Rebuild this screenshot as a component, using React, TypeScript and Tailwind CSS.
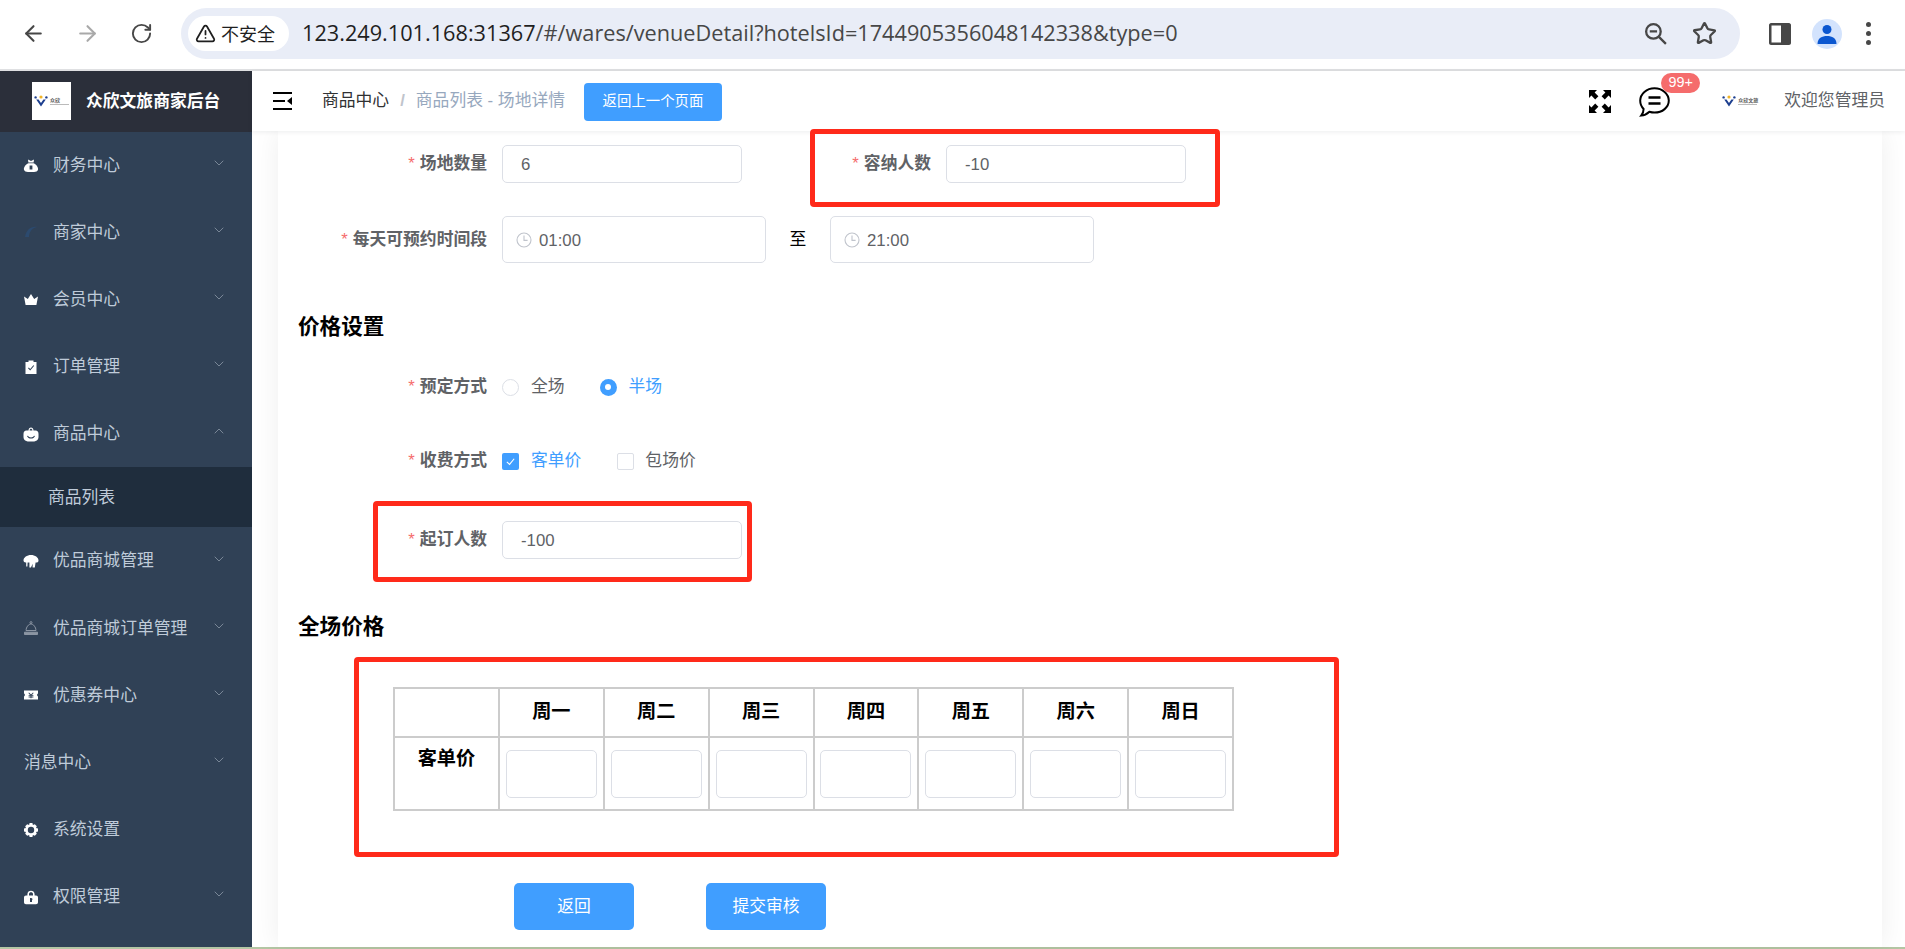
import { ArrowLeft, ArrowRight, ChevronDown, ChevronUp, RotateCw, Star, TriangleAlert } from "lucide-react";
import type { ReactNode } from "react";

const FONT = "font-['Liberation_Sans','Noto_Sans_CJK_SC',sans-serif]";

const icons: Record<string, ReactNode> = {
  bag: (
    <path d="M4 1.5 L7 3 L10 1.5 L9.6 4.4 L4.4 4.4 Z M4.4 5.2 H9.6 C12.6 6.6 14.6 9.6 14 11.8 C13.5 13.6 12 14 10 14 H4 C2 14 .5 13.6 0 11.8 C-.6 9.6 1.4 6.6 4.4 5.2 Z M5.6 7.6 V11.6 H8.4 V7.6 Z" fillRule="evenodd" fill="#fff" />
  ),
  swirl: <path d="M1 12 C2 5 7 1 13 2 C8 3 5 7 5 12 Z" fill="#2c4a6e" />,
  crown: <path d="M0 4.5 L3.8 7 L7 2 L10.2 7 L14 4.5 L12.4 13 H1.6 Z" fill="#fff" />,
  order: (
    <path d="M4.5 0.5 H9.5 V2 H12.5 V14 H1.5 V2 H4.5 Z M4 8.2 L6.2 10.4 L10.2 5.8 L9.4 5.2 L6.2 8.9 L4.8 7.4 Z" fillRule="evenodd" fill="#fff" />
  ),
  goods: (
    <path d="M4.5 3.5 C4.5 -0.5 9.5 -0.5 9.5 3.5 H11.5 C13.5 3.5 14.5 5 14.5 7 V10 C14.5 13 12 14.5 9 14.5 H5 C2 14.5 -.5 13 -.5 10 V7 C-.5 5 .5 3.5 2.5 3.5 Z M5.6 3.5 H8.4 C8.4 1 5.6 1 5.6 3.5 Z M3 9 C4 12.4 10 12.4 11 9 L10 8.8 C9 11 5 11 4 8.8 Z" fillRule="evenodd" fill="#fff" />
  ),
  mall: (
    <path d="M7 1 C11 1 14.5 3.4 14.5 6.5 C14.5 8.2 13 8.8 11.6 8.4 L10.8 13.5 H8.6 L8.6 9.8 L7 13.5 H5.4 L5.4 8.6 H3.6 L3.4 12.5 H2.2 L2.2 8.4 C1 8.7 -.5 8 -.5 6.5 C-.5 3.4 3 1 7 1 Z" fill="#fff" />
  ),
  cloche: (
    <g fill="none" stroke="#8b95a3" strokeWidth="1">
      <circle cx="7" cy="1.6" r="1" />
      <path d="M2 9.5 C2.2 6 4.6 3 7 3 C9.4 3 11.8 6 12 9.5 Z" />
      <path d="M0.5 11.2 H13.5 V13.5 H0.5 Z" fill="#8b95a3" />
    </g>
  ),
  ticket: (
    <path d="M0 2.5 H14 V5.6 C12.8 5.8 12.8 8.2 14 8.4 V11.5 H0 V8.4 C1.2 8.2 1.2 5.8 0 5.6 Z M5 4.4 L7 6.6 L9 4.4 L9.6 5 L8 6.9 H9.4 V7.8 H7.5 V8.5 H9.4 V9.4 H7.5 V10.3 H6.5 V9.4 H4.6 V8.5 H6.5 V7.8 H4.6 V6.9 H6 L4.4 5 Z" fillRule="evenodd" fill="#fff" />
  ),
  gear: (
    <path d="M5.6 0 H8.4 L8.9 2 L10.8 1.2 L12.8 3.2 L12 5.1 L14 5.6 V8.4 L12 8.9 L12.8 10.8 L10.8 12.8 L8.9 12 L8.4 14 H5.6 L5.1 12 L3.2 12.8 L1.2 10.8 L2 8.9 L0 8.4 V5.6 L2 5.1 L1.2 3.2 L3.2 1.2 L5.1 2 Z M7 3.8 A3.2 3.2 0 1 0 7 10.2 A3.2 3.2 0 1 0 7 3.8 Z" fillRule="evenodd" fill="#fff" />
  ),
  lock: (
    <path d="M3.4 5.6 V4.2 C3.4 -0.4 10.6 -0.4 10.6 4.2 V5.6 H12 C13.2 5.6 14 6.4 14 7.6 V12.2 C14 13.4 13.2 14.2 12 14.2 H2 C.8 14.2 0 13.4 0 12.2 V7.6 C0 6.4 .8 5.6 2 5.6 Z M5 5.6 H9 V4.2 C9 1.6 5 1.6 5 4.2 Z M6 8 V12 H8 V10.2 C9 9.4 8.4 8 7 8 Z" fillRule="evenodd" fill="#fff" />
  ),
};

const menu = [
  { label: "财务中心", icon: "bag" },
  { label: "商家中心", icon: "swirl" },
  { label: "会员中心", icon: "crown" },
  { label: "订单管理", icon: "order" },
  { label: "商品中心", icon: "goods", open: true, children: ["商品列表"] },
  { label: "优品商城管理", icon: "mall" },
  { label: "优品商城订单管理", icon: "cloche" },
  { label: "优惠券中心", icon: "ticket" },
  { label: "消息中心" },
  { label: "系统设置", icon: "gear", leaf: true },
  { label: "权限管理", icon: "lock" },
];

const weekdays = ["周一", "周二", "周三", "周四", "周五", "周六", "周日"];

function LogoMark({ text }: { text: string }) {
  return (
    <div className="flex items-center gap-[2px]">
      <svg viewBox="0 0 14 12" className="h-[12px] w-[14px]">
        <circle cx="7" cy="2" r="1.6" fill="#f0b429" />
        <circle cx="1.6" cy="2.4" r="1.2" fill="#1d3f8f" />
        <circle cx="12.4" cy="2.4" r="1.2" fill="#1d3f8f" />
        <path d="M2.2 4.4 L7 11.6 L11.8 4.4 L9.4 4.4 L7 8 L4.6 4.4 Z" fill="#1d3f8f" />
      </svg>
      <div className="flex flex-col gap-[1px]">
        <span className="text-[5px] leading-[5px] font-bold text-[#555]">{text}</span>
        <span className="h-px w-[19px] bg-[#bbb]" />
      </div>
    </div>
  );
}

function BrowserBar() {
  return (
    <div className="flex h-[71px] shrink-0 items-center border-b-2 border-[#dfe0e2] bg-white pb-[2px]">
      <div className="flex w-[181px] items-center pl-[21px] text-[#474747]">
        <ArrowLeft size={25} strokeWidth={2} />
        <ArrowRight size={25} strokeWidth={2} className="ml-[29px] text-[#a9a9a9]" />
        <RotateCw size={23} strokeWidth={2} className="ml-[30px]" />
      </div>
      <div className="flex h-[51px] w-[1559px] items-center rounded-full bg-[#e9edf7] pl-[7px] pr-[23px]">
        <div className="flex h-[35px] w-[101px] items-center gap-[5px] rounded-full bg-white pl-[7px] font-['Noto_Sans_CJK_SC',sans-serif] text-[18px] text-[#1f1f1f]">
          <TriangleAlert size={21} strokeWidth={2} />
          <span>不安全</span>
        </div>
        <span className="ml-[13px] font-['Open_Sans',sans-serif] text-[21.7px] text-[#1f1f1f]">
          123.249.101.168:31367<span className="text-[#474747]">/#/wares/venueDetail?hotelsId=1744905356048142338&amp;type=0</span>
        </span>
        <div className="ml-auto flex items-center gap-[24px] text-[#474747]">
          <svg viewBox="0 0 24 24" className="h-[25px] w-[25px]" fill="none" stroke="currentColor" strokeWidth="2.2">
            <circle cx="10" cy="10" r="7" />
            <path d="M15 15 L22 22 M6.5 10 H13.5" />
          </svg>
          <Star size={25} strokeWidth={2.2} />
        </div>
      </div>
      <div className="flex flex-1 items-center pl-[29px]">
        <svg viewBox="0 0 22 22" className="h-[22px] w-[22px]">
          <path d="M2 0 H20 C21 0 22 1 22 2 V20 C22 21 21 22 20 22 H2 C1 22 0 21 0 20 V2 C0 1 1 0 2 0 Z M2.5 2.5 V19.5 H12 V2.5 Z" fillRule="evenodd" fill="#474747" />
        </svg>
        <div className="ml-[21px] flex h-[30px] w-[30px] items-center justify-center rounded-full bg-[#d3e3fd]">
          <svg viewBox="0 0 20 20" className="h-[20px] w-[20px]" fill="#0b57d0">
            <circle cx="10" cy="5.5" r="4.5" />
            <path d="M0.5 20 C0.5 14 5 12 10 12 C15 12 19.5 14 19.5 20 Z" />
          </svg>
        </div>
        <div className="ml-[24px] flex flex-col gap-[4px]">
          <span className="h-[5px] w-[5px] rounded-full bg-[#474747]" />
          <span className="h-[5px] w-[5px] rounded-full bg-[#474747]" />
          <span className="h-[5px] w-[5px] rounded-full bg-[#474747]" />
        </div>
      </div>
    </div>
  );
}

function Sidebar() {
  return (
    <aside className="flex w-[252px] shrink-0 flex-col bg-[#304156]">
      <div className="flex h-[60.5px] shrink-0 items-center bg-[#2b2f3a] pl-[32px]">
        <div className="flex h-[38px] w-[39px] items-center justify-center bg-white">
          <LogoMark text="众欣" />
        </div>
        <span className="ml-[15px] text-[16.8px] font-bold text-white">众欣文旅商家后台</span>
      </div>
      {menu.map((item) => (
        <div key={item.label}>
          <div className="flex h-[67.2px] items-center pl-[24px] pr-[25px] text-[16.8px] text-[#bfcbd9]">
            {item.icon && (
              <svg viewBox="0 0 14 14" className="mr-[15px] h-[14px] w-[14px] shrink-0 overflow-visible">
                {icons[item.icon]}
              </svg>
            )}
            <span>{item.label}</span>
            {!item.leaf &&
              (item.open ? (
                <ChevronUp size={16} strokeWidth={1.2} className="-mt-[5px] ml-auto text-[#8d99a8]" />
              ) : (
                <ChevronDown size={16} strokeWidth={1.2} className="-mt-[5px] ml-auto text-[#8d99a8]" />
              ))}
          </div>
          {item.children?.map((child) => (
            <div key={child} className="flex h-[60px] items-center bg-[#1f2d3d] pl-[48px] text-[16.8px] text-[#bfcbd9]">
              {child}
            </div>
          ))}
        </div>
      ))}
    </aside>
  );
}

function Header() {
  return (
    <header className="relative z-10 flex h-[60px] shrink-0 items-center bg-white shadow-[0_1px_5px_rgba(0,21,41,0.08)]">
      <svg viewBox="0 0 19 18" className="ml-[21px] h-[18px] w-[19px]" fill="#000">
        <path d="M0 0 H19 V2 H0 Z M0 8 H12 V10 H0 Z M0 16 H19 V18 H0 Z M19 5 V13 L14 9 Z" />
      </svg>
      <span className="ml-[30px] text-[16.8px] text-[#303133]">商品中心</span>
      <span className="mx-[11px] text-[16.8px] font-bold text-[#c0c4cc]">/</span>
      <span className="text-[16.8px] text-[#97a8be]">商品列表 - 场地详情</span>
      <button className="ml-[19px] mt-[2px] h-[38px] w-[138px] rounded-[4px] bg-[#409eff] text-[14.4px] text-white">
        返回上一个页面
      </button>
      <div className="ml-auto flex items-center pr-[20px]">
        <svg viewBox="0 0 22 23" className="h-[23px] w-[22px]" fill="#000">
          <path d="M0 0 H8 L5.6 2.4 L9.4 6.2 L6.2 9.4 L2.4 5.6 L0 8 Z" />
          <path d="M22 0 H14 L16.4 2.4 L12.6 6.2 L15.8 9.4 L19.6 5.6 L22 8 Z" />
          <path d="M0 23 H8 L5.6 20.6 L9.4 16.8 L6.2 13.6 L2.4 17.4 L0 15 Z" />
          <path d="M22 23 H14 L16.4 20.6 L12.6 16.8 L15.8 13.6 L19.6 17.4 L22 15 Z" />
        </svg>
        <div className="relative ml-[28px] mt-[1px]">
          <svg viewBox="0 0 31 30" className="h-[30px] w-[31px]" fill="none" stroke="#000" strokeWidth="2">
            <path d="M15.5 1.2 C23.4 1.2 29.8 6.9 29.8 13.6 C29.8 20.3 23.4 25.6 15.5 25.6 C13.6 25.6 12 25.3 10.4 24.8 C8 27 5.4 28.4 2.2 28.6 C3.8 26.6 4.6 24.4 4.6 22 C2.4 19.8 1.2 16.8 1.2 13.6 C1.2 6.9 7.6 1.2 15.5 1.2 Z" />
            <path d="M9.5 10.5 H21.5 M9.5 16.5 H21.5" strokeWidth="2.4" />
          </svg>
          <span className="absolute -top-[14px] left-[22px] flex h-[20px] w-[39px] items-center justify-center rounded-full bg-[#f56c6c] font-['Liberation_Sans',sans-serif] text-[14.4px] text-white">
            99+
          </span>
        </div>
        <div className="ml-[52px]">
          <LogoMark text="众欣文旅" />
        </div>
        <span className="ml-[26px] text-[16.8px] text-[#606266]">欢迎您管理员</span>
      </div>
    </header>
  );
}

function Label({ width, children }: { width: string; children: string }) {
  return (
    <label className={`${width} shrink-0 text-right text-[16.8px] font-bold text-[#606266]`}>
      <span className="mr-[5px] font-normal text-[#f56c6c]">*</span>
      {children}
    </label>
  );
}

function TextBox({ value }: { value: string }) {
  return (
    <input
      readOnly
      value={value}
      className="ml-[15px] h-[38px] w-[240px] rounded-[5px] border border-[#dcdfe6] px-[18px] pt-[2px] text-[16.8px] text-[#606266] outline-none"
    />
  );
}

function TimeBox({ value }: { value: string }) {
  return (
    <div className="flex h-[47px] w-[264px] items-center rounded-[5px] border border-[#dcdfe6] pl-[13px] text-[16.8px] text-[#606266]">
      <svg viewBox="0 0 16 16" className="h-[16px] w-[16px]" fill="none" stroke="#c0c4cc" strokeWidth="1.1">
        <circle cx="8" cy="8" r="7" />
        <path d="M8 3.5 V8.4 H11.6" />
      </svg>
      <span className="ml-[7px] pt-[2px]">{value}</span>
    </div>
  );
}

function Circle({ checked }: { checked?: boolean }) {
  return checked ? (
    <span className="flex h-[17px] w-[17px] items-center justify-center rounded-full bg-[#409eff]">
      <span className="h-[6px] w-[6px] rounded-full bg-white" />
    </span>
  ) : (
    <span className="h-[17px] w-[17px] rounded-full border border-[#dcdfe6]" />
  );
}

function Box({ checked }: { checked?: boolean }) {
  return checked ? (
    <span className="flex h-[17px] w-[17px] items-center justify-center rounded-[2px] bg-[#409eff]">
      <svg viewBox="0 0 12 12" className="h-[11px] w-[11px]" fill="none" stroke="#fff" strokeWidth="1.2">
        <path d="M2 6.4 L5 9.2 L10 3" />
      </svg>
    </span>
  ) : (
    <span className="h-[17px] w-[17px] rounded-[2px] border border-[#dcdfe6]" />
  );
}

/** Red annotation frames drawn over the form in the screenshot. */
function Frame({ className }: { className: string }) {
  return <div className={`pointer-events-none absolute z-20 rounded-[4px] border-[5px] border-[#ff2a1a] ${className}`} />;
}

function PriceTable() {
  const cell = "border-2 border-[#cccccc] text-center";
  return (
    <table className="ml-[115px] mt-[45px] h-[124px] w-[841px] table-fixed border-collapse text-[19.2px] font-bold text-black">
      <tbody>
        <tr className="h-[49px]">
          <td className={cell} />
          {weekdays.map((d) => (
            <td key={d} className={cell}>
              {d}
            </td>
          ))}
        </tr>
        <tr>
          <td className={`${cell} pt-[7px] align-top`}>客单价</td>
          {weekdays.map((d) => (
            <td key={d} className={cell}>
              <input readOnly className="mx-auto block h-[48px] w-[91px] rounded-[5px] border border-[#dcdfe6] outline-none" />
            </td>
          ))}
        </tr>
      </tbody>
    </table>
  );
}

function VenueForm() {
  return (
    <div className="relative ml-[26px] mr-[23px] flex-1 bg-white pt-[14px] shadow-[0_0_26px_rgba(0,0,0,0.07)]">
      <div className="flex h-[38px] items-center">
        <Label width="w-[209px]">场地数量</Label>
        <TextBox value="6" />
        <Label width="w-[189px]">容纳人数</Label>
        <TextBox value="-10" />
      </div>
      <div className="mt-[33px] flex h-[47px] items-center">
        <Label width="w-[209px]">每天可预约时间段</Label>
        <div className="ml-[15px]">
          <TimeBox value="01:00" />
        </div>
        <span className="w-[64px] text-center text-[16.8px] text-black">至</span>
        <TimeBox value="21:00" />
      </div>
      <h3 className="ml-[20px] mt-[49px] h-[30px] text-[21.6px] leading-[30px] font-bold text-black">价格设置</h3>
      <div className="mt-[33px] flex h-[24px] items-center text-[16.8px] text-[#606266]">
        <Label width="w-[209px]">预定方式</Label>
        <div className="ml-[15px] flex items-center gap-[12px]">
          <Circle />
          <span>全场</span>
        </div>
        <div className="ml-[35px] flex items-center gap-[12px] text-[#409eff]">
          <Circle checked />
          <span>半场</span>
        </div>
      </div>
      <div className="mt-[50px] flex h-[24px] items-center text-[16.8px] text-[#606266]">
        <Label width="w-[209px]">收费方式</Label>
        <div className="ml-[15px] flex items-center gap-[12px] text-[#409eff]">
          <Box checked />
          <span>客单价</span>
        </div>
        <div className="ml-[36px] flex items-center gap-[11px]">
          <Box />
          <span>包场价</span>
        </div>
      </div>
      <div className="mt-[48px] flex h-[38px] items-center">
        <Label width="w-[209px]">起订人数</Label>
        <TextBox value="-100" />
      </div>
      <h3 className="ml-[20px] mt-[53px] h-[30px] text-[21.6px] leading-[30px] font-bold text-black">全场价格</h3>
      <PriceTable />
      <div className="ml-[236px] mt-[72px] flex gap-[72px]">
        <button className="h-[47px] w-[120px] rounded-[5px] bg-[#409eff] text-[16.8px] text-white">返回</button>
        <button className="h-[47px] w-[120px] rounded-[5px] bg-[#409eff] text-[16.8px] text-white">提交审核</button>
      </div>

      <Frame className="left-[532px] -top-[2px] h-[78px] w-[410px]" />
      <Frame className="left-[95px] top-[370px] h-[81px] w-[379px]" />
      <Frame className="left-[76px] top-[526px] h-[200px] w-[985px]" />
    </div>
  );
}

export default function App() {
  return (
    <div className={`flex h-[949px] w-[1905px] flex-col overflow-hidden bg-white ${FONT}`}>
      <BrowserBar />
      <div className="flex min-h-0 flex-1">
        <Sidebar />
        <main className="flex min-w-0 flex-1 flex-col">
          <Header />
          <VenueForm />
        </main>
      </div>
      <div className="h-[2px] shrink-0 bg-[#b4c6a4]" />
    </div>
  );
}
